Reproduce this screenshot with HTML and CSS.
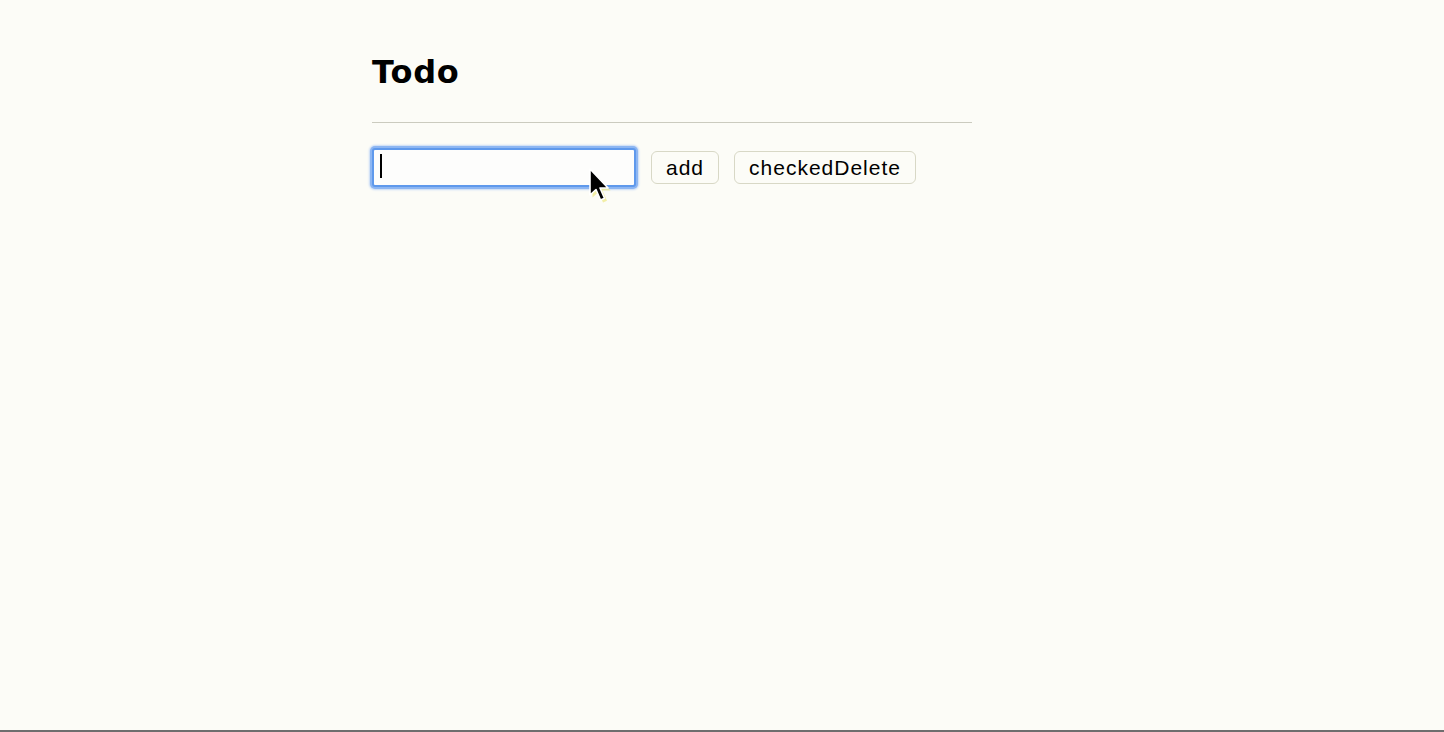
FILE: index.html
```html
<!DOCTYPE html>
<html lang="en">
<head>
<meta charset="utf-8">
<title>Todo</title>
<link rel="stylesheet" href="styles.css">
</head>
<body>
<main class="app">
  <h1 class="title">Todo</h1>
  <hr class="rule">
  <div class="controls">
    <div class="field">
      <input class="todo-input" type="text" aria-label="New todo">
      <span class="caret"></span>
      <svg class="pointer" width="26" height="40" viewBox="0 0 26 40" aria-hidden="true">
        <path d="M2 2 L2 28 L8 22.5 L12.5 33 L16.5 31.3 L12 21 L20 21 Z" fill="#efe98a" opacity="0.75" transform="translate(2.5 2.5)"/>
        <path d="M2 2 L2 28 L8 22.5 L12.5 33 L16.5 31.3 L12 21 L20 21 Z" fill="#000" stroke="#fff" stroke-width="1.6" stroke-linejoin="round"/>
      </svg>
    </div>
    <button class="btn" type="button">add</button>
    <button class="btn" type="button">checkedDelete</button>
  </div>
</main>
</body>
</html>
```

FILE: styles.css
```css
html {
  height: 100%;
}

body {
  margin: 0;
  min-height: 100%;
  box-sizing: border-box;
  background: #fcfcf7;
  border-bottom: 2px solid #6e6e6e;
  font-family: "Liberation Sans", Arial, sans-serif;
  color: #000;
}

.app {
  width: 600px;
  padding: 54px 0 0 372px;
}

.title {
  margin: 0;
  font-family: "DejaVu Sans", Verdana, sans-serif;
  font-weight: bold;
  font-size: 32px;
  letter-spacing: 0.8px;
  line-height: 36px;
}

.rule {
  margin: 32px 0 0;
  border: 0;
  height: 1px;
  background: #cbcbbf;
}

.controls {
  display: flex;
  align-items: center;
  margin-top: 25px;
}

.field {
  position: relative;
  width: 264px;
  height: 39px;
  margin-right: 15px;
}

.todo-input {
  box-sizing: border-box;
  width: 100%;
  height: 100%;
  margin: 0;
  padding: 0 6px;
  border: 2px solid #5f99ec;
  border-radius: 3px;
  background: #fdfdfc;
  box-shadow: 0 0 0 2px #8db6f2, 0 0 2px 3px #c5d9f6;
  outline: none;
  caret-color: transparent;
  font: 20px "Liberation Sans", Arial, sans-serif;
}

.caret {
  position: absolute;
  left: 8px;
  top: 6px;
  width: 2px;
  height: 24px;
  background: #000;
}

.pointer {
  position: absolute;
  left: 216px;
  top: 19px;
}

.btn {
  box-sizing: border-box;
  height: 33px;
  margin: 0 15px 0 0;
  padding: 0 14px;
  border: 1px solid #d8d8c6;
  border-radius: 6px;
  background: #fcfcf7;
  color: #000;
  font-family: "Liberation Sans", Arial, sans-serif;
  font-size: 21px;
  letter-spacing: 1px;
  line-height: 31px;
}
```
